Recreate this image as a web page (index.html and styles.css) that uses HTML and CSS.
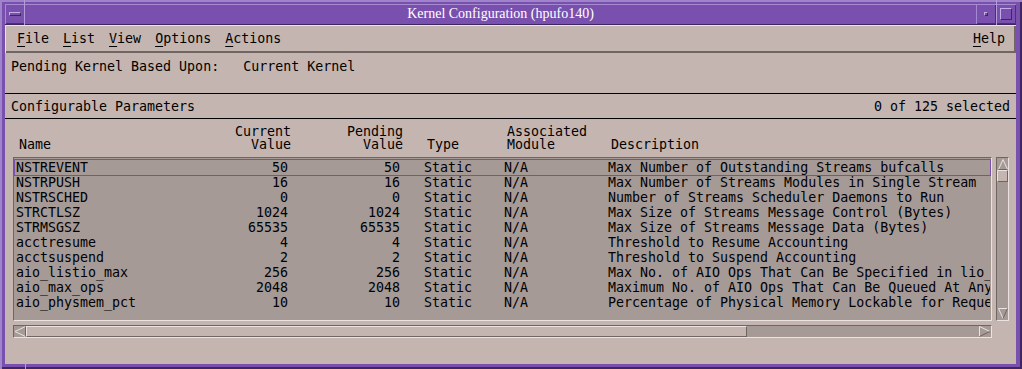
FILE: index.html
```html
<!DOCTYPE html>
<html>
<head>
<meta charset="utf-8">
<link rel="stylesheet" href="styles.css">
</head>
<body>
<div class="frame">
  <span class="handle h-left"></span>
  <span class="handle h-right"></span>
  <span class="handle h-bottom"></span>
  <div class="titlebar">
    <div class="tb-btn"><span class="menu-bar"></span></div>
    <div class="title">Kernel Configuration (hpufo140)</div>
    <div class="tb-btn"><span class="min-dot"></span></div>
    <div class="tb-btn"><span class="max-box"></span></div>
  </div>
  <div class="client">
    <div class="menubar">
      <span class="mi"><u>F</u>ile</span>
      <span class="mi"><u>L</u>ist</span>
      <span class="mi"><u>V</u>iew</span>
      <span class="mi"><u>O</u>ptions</span>
      <span class="mi"><u>A</u>ctions</span>
      <span class="mi help"><u>H</u>elp</span>
    </div>
    <div class="pending">Pending Kernel Based Upon:   Current Kernel</div>
    <div class="sep"></div>
    <div class="section-head"><span>Configurable Parameters</span><span>0 of 125 selected</span></div>
    <div class="sep"></div>
    <div class="colheads grid">
      <div class="bottom">Name</div>
      <div class="right">Current<br>Value</div>
      <div class="right">Pending<br>Value</div>
      <div class="bottom pad">Type</div>
      <div>Associated<br>Module</div>
      <div class="bottom">Description</div>
    </div>
    <div class="listwrap">
      <div class="list">
        <div class="row grid sel"><div>NSTREVENT</div><div class="right">50</div><div class="right">50</div><div class="pad">Static</div><div>N/A</div><div class="desc">Max Number of Outstanding Streams bufcalls</div></div>
        <div class="row grid"><div>NSTRPUSH</div><div class="right">16</div><div class="right">16</div><div class="pad">Static</div><div>N/A</div><div class="desc">Max Number of Streams Modules in Single Stream</div></div>
        <div class="row grid"><div>NSTRSCHED</div><div class="right">0</div><div class="right">0</div><div class="pad">Static</div><div>N/A</div><div class="desc">Number of Streams Scheduler Daemons to Run</div></div>
        <div class="row grid"><div>STRCTLSZ</div><div class="right">1024</div><div class="right">1024</div><div class="pad">Static</div><div>N/A</div><div class="desc">Max Size of Streams Message Control (Bytes)</div></div>
        <div class="row grid"><div>STRMSGSZ</div><div class="right">65535</div><div class="right">65535</div><div class="pad">Static</div><div>N/A</div><div class="desc">Max Size of Streams Message Data (Bytes)</div></div>
        <div class="row grid"><div>acctresume</div><div class="right">4</div><div class="right">4</div><div class="pad">Static</div><div>N/A</div><div class="desc">Threshold to Resume Accounting</div></div>
        <div class="row grid"><div>acctsuspend</div><div class="right">2</div><div class="right">2</div><div class="pad">Static</div><div>N/A</div><div class="desc">Threshold to Suspend Accounting</div></div>
        <div class="row grid"><div>aio_listio_max</div><div class="right">256</div><div class="right">256</div><div class="pad">Static</div><div>N/A</div><div class="desc">Max No. of AIO Ops That Can Be Specified in lio_listio Call</div></div>
        <div class="row grid"><div>aio_max_ops</div><div class="right">2048</div><div class="right">2048</div><div class="pad">Static</div><div>N/A</div><div class="desc">Maximum No. of AIO Ops That Can Be Queued At Any Time</div></div>
        <div class="row grid"><div>aio_physmem_pct</div><div class="right">10</div><div class="right">10</div><div class="pad">Static</div><div>N/A</div><div class="desc">Percentage of Physical Memory Lockable for Requests</div></div>
      </div>
      <div class="vscroll">
        <svg class="arrow" width="12" height="12" viewBox="0 0 12 12"><polyline points="1.5,11.5 6,1.5 10.5,11.5" fill="none" stroke="#ebe3e1"/><line x1="1.5" y1="11.5" x2="10.5" y2="11.5" stroke="#6f6562"/></svg>
        <div class="vthumb"></div>
        <div class="vtrough"></div>
        <svg class="arrow" width="12" height="12" viewBox="0 0 12 12"><line x1="1.5" y1="0.5" x2="10.5" y2="0.5" stroke="#ebe3e1"/><polyline points="1.5,0.5 6,10.5" fill="none" stroke="#ebe3e1"/><polyline points="6,10.5 10.5,0.5" fill="none" stroke="#6f6562"/></svg>
      </div>
    </div>
    <div class="hscroll">
      <svg class="arrow" width="12" height="11" viewBox="0 0 12 11"><polyline points="11.5,0.5 1,5.5 11.5,10.5" fill="none" stroke="#ebe3e1"/><line x1="11.5" y1="0.5" x2="11.5" y2="10.5" stroke="#6f6562"/></svg>
      <div class="hthumb"></div>
      <div class="htrough"></div>
      <svg class="arrow" width="12" height="11" viewBox="0 0 12 11"><line x1="0.5" y1="0.5" x2="0.5" y2="10.5" stroke="#ebe3e1"/><polyline points="0.5,0.5 11,5.5" fill="none" stroke="#ebe3e1"/><polyline points="11,5.5 0.5,10.5" fill="none" stroke="#6f6562"/></svg>
    </div>
  </div>
</div>
</body>
</html>
```
FILE: styles.css
```css
* { box-sizing: border-box; }
html, body { margin: 0; padding: 0; }
body {
  width: 1022px;
  height: 369px;
  overflow: hidden;
  background: #7a50ae;
  font-family: "DejaVu Sans Mono", "Liberation Mono", monospace;
  font-size: 13.3px;
  color: #000;
}
.frame {
  position: relative;
  height: 369px;
  padding: 4px 6px 5px 5px;
  display: flex;
  flex-direction: column;
  background: #7a50ae;
  box-shadow: inset 2px 2px 0 #9f84cc, inset -2px -2px 0 #3d2763;
}
.handle { position: absolute; background: #b39ddb; }
.h-left { left: 24px; top: 0; width: 1px; height: 25px; }
.h-right { left: 996px; top: 0; width: 1px; height: 25px; }
.h-bottom { left: 25px; top: 364px; width: 1px; height: 5px; }

.titlebar {
  height: 21px;
  flex: none;
  display: flex;
  border-bottom: 1px solid #3d2763;
}
.tb-btn {
  width: 20px;
  flex: none;
  display: flex;
  align-items: center;
  justify-content: center;
  background: #7a50ae;
  box-shadow: inset 1px 1px 0 #a58ad2, inset -1px -1px 0 #4a3077;
}
.menu-bar {
  width: 12px;
  height: 4px;
  border-top: 1px solid #c2b0e4;
  border-left: 1px solid #c2b0e4;
  border-bottom: 1px solid #3d2763;
  border-right: 1px solid #3d2763;
}
.min-dot {
  width: 4px;
  height: 4px;
  border-top: 1px solid #c2b0e4;
  border-left: 1px solid #c2b0e4;
  border-bottom: 1px solid #3d2763;
  border-right: 1px solid #3d2763;
}
.max-box {
  width: 12px;
  height: 12px;
  border-top: 1px solid #c2b0e4;
  border-left: 1px solid #c2b0e4;
  border-bottom: 1px solid #3d2763;
  border-right: 1px solid #3d2763;
}
.title {
  flex: 1;
  text-align: center;
  color: #fff;
  font-family: "Liberation Serif", serif;
  font-size: 14px;
  line-height: 20px;
  background: #7a50ae;
  box-shadow: inset 0 1px 0 #a58ad2;
}

.client {
  flex: 1;
  background: #c4b5b1;
  display: flex;
  flex-direction: column;
}
.menubar {
  height: 28px;
  flex: none;
  display: flex;
  align-items: center;
  gap: 14px;
  padding: 0 11px 1px 12px;
  box-shadow: inset 1px 1px 0 #ebe3e1, inset -2px -2px 0 #6f6562;
  line-height: 16px;
}
.mi u { text-decoration: underline; text-underline-offset: 3px; text-decoration-thickness: 1px; }
.help { margin-left: auto; }

.pending {
  height: 40px;
  flex: none;
  padding: 6px 6px 0;
  line-height: 16px;
  white-space: pre;
}
.sep { height: 1px; flex: none; background: #000; }
.section-head {
  height: 24px;
  flex: none;
  display: flex;
  justify-content: space-between;
  align-items: center;
  padding: 0 6px;
}

.grid {
  display: grid;
  grid-template-columns: 200px 72px 112px 104px 104px minmax(0, 1fr);
  white-space: nowrap;
}
.right { text-align: right; }
.pad { padding-left: 24px; }
.bottom { align-self: end; }

.colheads {
  height: 38px;
  flex: none;
  padding: 6px 0 6px 14px;
  line-height: 13.3px;
}

.listwrap {
  display: flex;
  flex: none;
  gap: 4px;
  margin: 0 7px 0 8px;
  height: 164px;
}
.list {
  flex: 1;
  min-width: 0;
  background: #a69a97;
  border-top: 1px solid #6f6562;
  border-left: 1px solid #6f6562;
  border-bottom: 1px solid #ebe3e1;
  border-right: 1px solid #ebe3e1;
  padding: 2px 1px 0 1px;
}
.row {
  height: 15px;
  line-height: 15px;
  padding-left: 1px;
}
.row.sel { box-shadow: 0 0 0 1px #7a50ae; }
.desc { overflow-x: clip; overflow-y: visible; }

.vscroll {
  width: 13px;
  flex: none;
  display: flex;
  flex-direction: column;
  background: #a69a97;
  border-left: 1px solid #6f6562;
  border-top: 1px solid #6f6562;
  border-right: 1px solid #ebe3e1;
  border-bottom: 1px solid #ebe3e1;
}
.arrow { display: block; flex: none; }
.vthumb {
  height: 12px;
  flex: none;
  background: #c4b5b1;
  border-top: 1px solid #ebe3e1;
  border-left: 1px solid #ebe3e1;
  border-bottom: 1px solid #6f6562;
  border-right: 1px solid #6f6562;
}
.vtrough { flex: 1; }

.hscroll {
  height: 13px;
  flex: none;
  margin: 4px 0 0 8px;
  width: 979px;
  display: flex;
  background: #a69a97;
  border-top: 1px solid #6f6562;
  border-left: 1px solid #6f6562;
  border-bottom: 1px solid #ebe3e1;
  border-right: 1px solid #ebe3e1;
}
.hthumb {
  width: 721px;
  flex: none;
  background: #c4b5b1;
  border-top: 1px solid #ebe3e1;
  border-left: 1px solid #ebe3e1;
  border-bottom: 1px solid #6f6562;
  border-right: 1px solid #6f6562;
}
.htrough { flex: 1; }
```
